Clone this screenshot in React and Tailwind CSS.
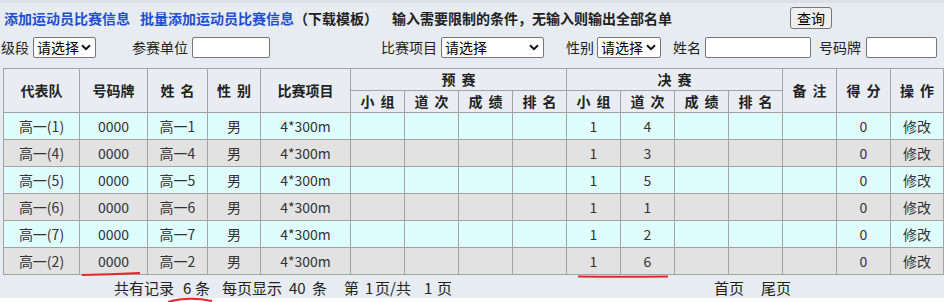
import React from 'react';

const ROWS = [
  { team: '高一(1)', name: '高一1', group: '1', lane: '4' },
  { team: '高一(4)', name: '高一4', group: '1', lane: '3' },
  { team: '高一(5)', name: '高一5', group: '1', lane: '5' },
  { team: '高一(6)', name: '高一6', group: '1', lane: '1' },
  { team: '高一(7)', name: '高一7', group: '1', lane: '2' },
  { team: '高一(2)', name: '高一2', group: '1', lane: '6' },
];

const WIDTHS = [76, 68, 60, 53, 90, 54, 54, 54, 54, 54, 54, 54, 54, 54, 54, 53];
const SUB = ['小 组', '道 次', '成 绩', '排 名'];

// paging text pieces with the widths they take up in the row
const PAGING = [
  ['共有记录', 69], ['6', 12], ['条', 27], ['每页显示', 67], ['40', 23], ['条', 32],
  ['第', 21], ['1', 10], ['页/共', 49], ['1', 13], ['页', 16],
];

function FakeSelect({ width }) {
  return (
    <div
      className="flex items-center justify-between h-[21px] bg-white border border-[#767676] rounded-[2px] pl-[3px] pr-[4px] text-[14px] text-black"
      style={{ width }}
    >
      <span>请选择</span>
      <svg width="10" height="7" viewBox="0 0 10 7">
        <path d="M1 1.2 L5 5.2 L9 1.2" fill="none" stroke="#111" strokeWidth="2" />
      </svg>
    </div>
  );
}

function TextBox({ width }) {
  return <div className="h-[21px] bg-white border border-[#767676] rounded-[2px]" style={{ width }} />;
}

export default function App() {
  const th = 'border border-[#a3a3a3] bg-[#e9edf3] font-bold text-[14px] text-[#222] text-center p-0 [word-spacing:3px]';
  const td = 'border border-[#a3a3a3] text-[14px] text-[#333] text-center p-0 h-[27px]';

  return (
    <div
      className="relative w-[948px] h-[302px] bg-white overflow-hidden"
      style={{ fontFamily: '"Noto Sans CJK SC", "Liberation Sans", sans-serif' }}
    >
      <div className="w-[944px] h-[298px] bg-[#e7ecf2] border-t-[3px] border-[#dde1e6]">
        {/* top line */}
        <div className="flex items-center h-[30px] text-[14px] font-bold">
          <span className="ml-[4px] text-[#1f4fd0]">添加运动员比赛信息</span>
          <span className="ml-[10px] text-[#1f4fd0]">批量添加运动员比赛信息</span>
          <span className="text-[#222]">（下载模板）</span>
          <span className="ml-[14px] text-[#222]">输入需要限制的条件，无输入则输出全部名单</span>
          <div className="ml-[118px] h-[22px] px-[6px] flex items-center bg-[#efefef] border border-[#767676] rounded-[3px] font-normal text-black">
            查询
          </div>
        </div>

        {/* filters */}
        <div className="flex items-center h-[29px] text-[14px] text-[#222]">
          <span className="ml-[1px]">级段</span>
          <div className="ml-[4px]"><FakeSelect width={63} /></div>
          <span className="ml-[36px]">参赛单位</span>
          <div className="ml-[4px]"><TextBox width={78} /></div>
          <span className="ml-[111px]">比赛项目</span>
          <div className="ml-[4px]"><FakeSelect width={103} /></div>
          <span className="ml-[22px]">性别</span>
          <div className="ml-[3px]"><FakeSelect width={64} /></div>
          <span className="ml-[12px]">姓名</span>
          <div className="ml-[4px]"><TextBox width={106} /></div>
          <span className="ml-[8px]">号码牌</span>
          <div className="ml-[5px]"><TextBox width={71} /></div>
        </div>

        <table className="ml-[3px] mt-[6px] table-fixed border-collapse w-[940px]">
          <colgroup>
            {WIDTHS.map((w, i) => (
              <col key={i} style={{ width: w }} />
            ))}
          </colgroup>
          <thead>
            <tr className="h-[22px]">
              <th rowSpan={2} className={th}>代表队</th>
              <th rowSpan={2} className={th}>号码牌</th>
              <th rowSpan={2} className={th}>姓 名</th>
              <th rowSpan={2} className={th}>性 别</th>
              <th rowSpan={2} className={th}>比赛项目</th>
              <th colSpan={4} className={th}>预 赛</th>
              <th colSpan={4} className={th}>决 赛</th>
              <th rowSpan={2} className={th}>备 注</th>
              <th rowSpan={2} className={th}>得 分</th>
              <th rowSpan={2} className={th}>操 作</th>
            </tr>
            <tr className="h-[22px]">
              {SUB.map((s) => <th key={'a' + s} className={th}>{s}</th>)}
              {SUB.map((s) => <th key={'b' + s} className={th}>{s}</th>)}
            </tr>
          </thead>
          <tbody>
            {ROWS.map((r, i) => (
              <tr key={r.team} className={i % 2 === 0 ? 'bg-[#e0fdfd]' : 'bg-[#e2e2e2]'}>
                <td className={td}>{r.team}</td>
                <td className={td}>0000</td>
                <td className={td}>{r.name}</td>
                <td className={td}>男</td>
                <td className={td}>4*300m</td>
                <td className={td}></td>
                <td className={td}></td>
                <td className={td}></td>
                <td className={td}></td>
                <td className={td}>{r.group}</td>
                <td className={td}>{r.lane}</td>
                <td className={td}></td>
                <td className={td}></td>
                <td className={td}></td>
                <td className={td}>0</td>
                <td className={td}>修改</td>
              </tr>
            ))}
          </tbody>
        </table>

        {/* paging */}
        <div className="flex items-center h-[27px] text-[15px] text-[#222]">
          <div className="ml-[114px] flex">
            {PAGING.map(([t, w], i) => (
              <span key={i} className="shrink-0" style={{ width: w }}>{t}</span>
            ))}
          </div>
          <span className="ml-[261px]">首页</span>
          <span className="ml-[17px]">尾页</span>
        </div>
      </div>

      {/* red hand-drawn marks */}
      <svg className="absolute left-0 top-0 pointer-events-none" width="948" height="302">
        <path d="M82 275 Q110 274.5 140 273" fill="none" stroke="#e8262a" strokeWidth="2" />
        <path d="M578 276.5 Q620 277 668 276.5" fill="none" stroke="#e8262a" strokeWidth="2" />
        <path d="M168 302 Q188 296 212 301" fill="none" stroke="#e8262a" strokeWidth="2" />
      </svg>
    </div>
  );
}
